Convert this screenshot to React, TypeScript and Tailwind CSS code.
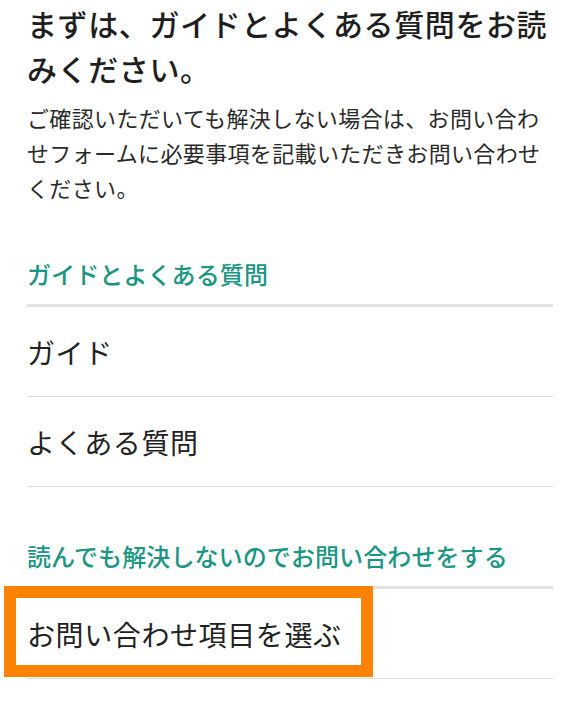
import React from "react";

const font = { fontFamily: '"Noto Sans CJK JP", "Noto Sans", sans-serif' };

function SectionHeader({ children }: { children: React.ReactNode }) {
  return (
    <div className="pt-[51px] pb-[12px] border-b-[3px] border-[#e2e2e2]">
      <h2 className="text-[24px] leading-[36px] font-medium text-[#1a9682] tracking-[0.1px]">{children}</h2>
    </div>
  );
}

function Item({ children }: { children: React.ReactNode }) {
  return (
    <div className="h-[90px] flex items-center border-b border-[#dcdcdc]">
      <span className="text-[28px] leading-[42px] text-[#222] tracking-[0.6px]">{children}</span>
    </div>
  );
}

export default function App() {
  return (
    <div className="w-[567px] h-[702px] bg-white overflow-hidden" style={font}>
      <div className="pl-[27px] pr-[14px]">
        <h1 className="pt-[1px] text-[30px] leading-[45px] font-medium text-[#1e1e1e] tracking-[0.6px]">
          まずは、ガイドとよくある質問をお読みください。
        </h1>
        <p className="mt-[9px] text-[22px] leading-[35px] text-[#2a2a2a] tracking-[0.35px]">
          ご確認いただいても解決しない場合は、お問い合わせフォームに必要事項を記載いただきお問い合わせください。
        </p>

        <SectionHeader>ガイドとよくある質問</SectionHeader>
        <Item>ガイド</Item>
        <Item>よくある質問</Item>

        <SectionHeader>読んでも解決しないのでお問い合わせをする</SectionHeader>
        <div className="relative">
          <Item>お問い合わせ項目を選ぶ</Item>
          <div className="absolute left-[-23px] top-[-3px] w-[369px] h-[91px] border-[12px] border-[#fb8204] pointer-events-none" />
        </div>
      </div>
    </div>
  );
}
